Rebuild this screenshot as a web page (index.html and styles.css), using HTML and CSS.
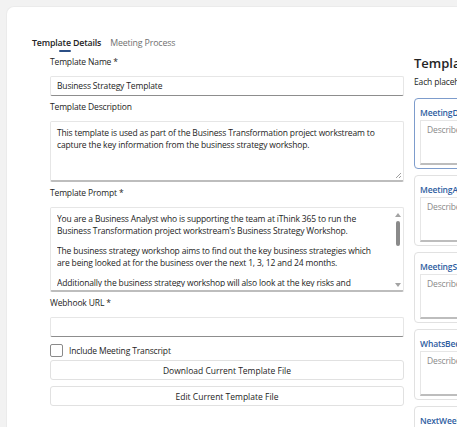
FILE: index.html
```html
<!DOCTYPE html>
<html lang="en">
<head>
  <meta charset="UTF-8">
  <title>Template Details</title>
  <link rel="stylesheet" href="styles.css">
</head>
<body>
  <div class="panel">
    <div class="tabs">
      <span class="tab active">Template Details</span>
      <span class="tab">Meeting Process</span>
    </div>

    <div class="content">
      <div class="form">
        <label class="label">Template Name *</label>
        <div class="input">Business Strategy Template</div>

        <label class="label">Template Description</label>
        <div class="textarea desc">
          <p>This template is used as part of the Business Transformation project workstream to capture the key information from the business strategy workshop.</p>
          <span class="grip"></span>
        </div>

        <label class="label">Template Prompt *</label>
        <div class="textarea prompt">
          <div class="prompt-text">
            <p>You are a Business Analyst who is supporting the team at iThink 365 to run the Business Transformation project workstream's Business Strategy Workshop.</p>
            <p>The business strategy workshop aims to find out the key business strategies which are being looked at for the business over the next 1, 3, 12 and 24 months.</p>
            <p>Additionally the business strategy workshop will also look at the key risks and</p>
          </div>
          <div class="scrollbar">
            <span class="arrow up"></span>
            <span class="thumb"></span>
            <span class="arrow down"></span>
          </div>
        </div>

        <label class="label">Webhook URL *</label>
        <div class="input"></div>

        <div class="check">
          <span class="box"></span>
          <span>Include Meeting Transcript</span>
        </div>
        <button class="btn">Download Current Template File</button>
        <button class="btn">Edit Current Template File</button>
      </div>

      <div class="placeholders">
        <h2>Template Placeholders</h2>
        <p class="hint">Each placeholder below is filled in from the meeting transcript.</p>

        <div class="ph focused">
          <div class="ph-name">MeetingDetails</div>
          <div class="ph-field">Describe the placeholder</div>
        </div>
        <div class="ph">
          <div class="ph-name">MeetingAttendees</div>
          <div class="ph-field">Describe the placeholder</div>
        </div>
        <div class="ph">
          <div class="ph-name">MeetingSummary</div>
          <div class="ph-field">Describe the placeholder</div>
        </div>
        <div class="ph">
          <div class="ph-name">WhatsBeenDone</div>
          <div class="ph-field">Describe the placeholder</div>
        </div>
        <div class="ph">
          <div class="ph-name">NextWeek</div>
          <div class="ph-field">Describe the placeholder</div>
        </div>
      </div>
    </div>
  </div>
</body>
</html>
```

FILE: styles.css
```css
body { margin: 0; background: #f2f2f2; font-family: "Open Sans", sans-serif; font-size: 8.5px; letter-spacing: -0.15px; color: #242424; overflow: hidden; height: 427px; }

.panel { margin: 6px 0 0 6px; height: 440px; background: #fff; border: 1px solid #ebebeb; border-right: none; border-radius: 8px 0 0 0; padding: 30px 0 0 25px; }

.tabs { display: flex; gap: 9px; }
.tab { color: #707070; padding-bottom: 5px; position: relative; line-height: 12px; font-size: 8.8px; }
.tab.active { color: #242424; font-weight: 600; }
.tab.active::after { content: ""; position: absolute; left: 27px; width: 12px; bottom: 2px; height: 2px; border-radius: 1px; background: #2b4f86; }

.content { display: grid; grid-template-columns: 354px 300px; column-gap: 10px; margin-left: 18px; }

.form { display: flex; flex-direction: column; }
.label { display: block; padding: 2px 0 8px; line-height: 12px; }
.input { height: 18px; border: 1px solid #e6e6e6; border-bottom-color: #8d8d8d; border-radius: 2px; padding: 0 6px; line-height: 18px; margin-bottom: 3px; }

.textarea { position: relative; border: 1px solid #e6e6e6; border-bottom: 2px solid #bdbdbd; border-radius: 2px; padding: 5px 6px; line-height: 12px; margin-bottom: 3px; overflow: hidden; }
.textarea p { margin: 0; }
.desc { height: 48px; }
.grip { position: absolute; right: 2px; bottom: 2px; width: 5px; height: 5px; background: linear-gradient(135deg, transparent 45%, #a0a0a0 45%, #a0a0a0 55%, transparent 55%, transparent 75%, #a0a0a0 75%, #a0a0a0 85%, transparent 85%); }

.prompt { height: 72px; padding-right: 20px; }
.prompt-text { height: 74px; overflow: hidden; }
.prompt-text p { margin-bottom: 8px; }
.scrollbar { position: absolute; right: 2px; top: 2px; bottom: 2px; width: 7px; display: flex; flex-direction: column; align-items: center; }
.arrow { width: 0; height: 0; border-left: 3px solid transparent; border-right: 3px solid transparent; }
.arrow.up { border-bottom: 4px solid #a3a3a3; margin-top: 3px; }
.arrow.down { border-top: 4px solid #a3a3a3; margin-top: auto; margin-bottom: 1px; }
.thumb { width: 4px; height: 25px; margin-top: 4px; border-radius: 2px; background: #8a8a8a; }

.check { display: flex; align-items: center; gap: 6px; height: 14px; margin: 3px 0 3px; }
.box { width: 11px; height: 11px; border: 1px solid #8a8a8a; border-radius: 2px; }

.btn { height: 20px; margin-bottom: 6px; background: #fff; border: 1px solid #e1e1e1; border-radius: 3px; font: inherit; color: #242424; }

.placeholders h2 { margin: 0; font-size: 13px; font-weight: 600; letter-spacing: 0; line-height: 18px; white-space: nowrap; }
.hint { margin: 4px 0 10px; line-height: 12px; white-space: nowrap; }
.ph { height: 71px; border: 1px solid #e1e1e1; border-radius: 4px; padding: 8px 0 0 5px; margin-bottom: 6px; box-sizing: border-box; }
.ph.focused { border-color: #7d9ccc; }
.ph-name { color: #2e5d9f; font-weight: 600; line-height: 12px; white-space: nowrap; }
.ph-field { box-sizing: border-box; height: 45px; margin-top: 1px; border: 1px solid #e6e6e6; border-bottom: 2px solid #bdbdbd; padding: 3px 6px; line-height: 12px; color: #8a8a8a; white-space: nowrap; }
```
